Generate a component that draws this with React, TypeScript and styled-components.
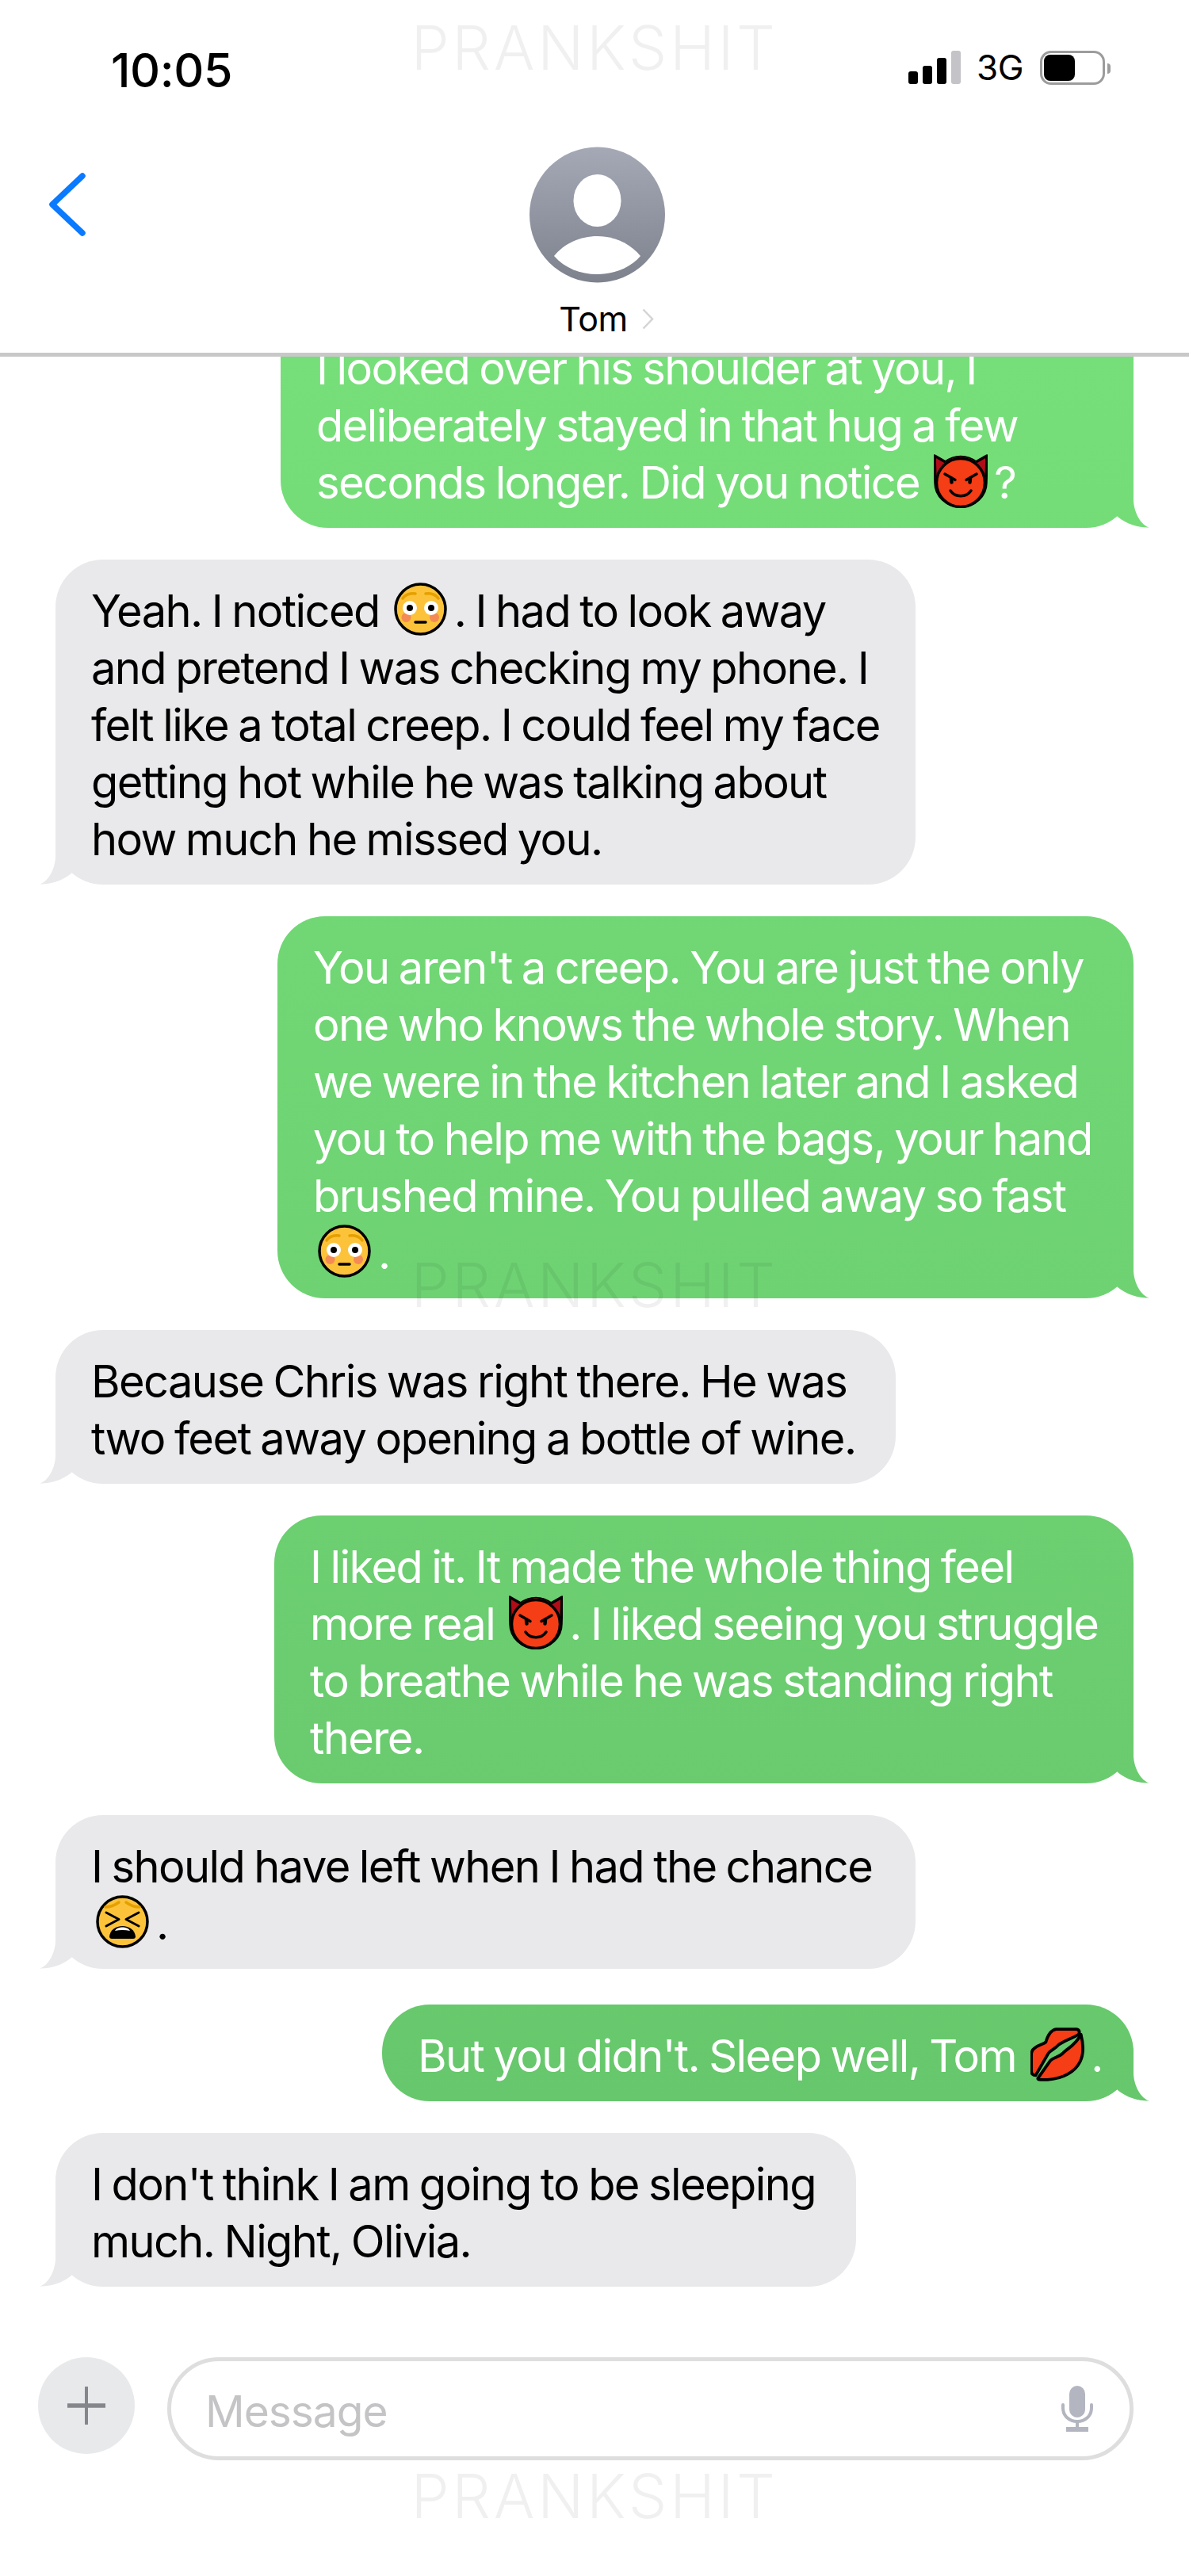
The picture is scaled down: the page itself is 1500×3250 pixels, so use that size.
import React from "react";
import styled, { createGlobalStyle, css } from "styled-components";

const GlobalStyle = createGlobalStyle`
  html, body { margin: 0; padding: 0; background: #fff; }
  body { font-family: Inter, "Liberation Sans", sans-serif; }
`;

const Screen = styled.div`
  position: relative;
  width: 1500px;
  height: 3250px;
  display: flex;
  flex-direction: column;
  overflow: hidden;
  background: #fff;
`;

const Watermark = styled.div<{ $top: number }>`
  position: absolute;
  left: 0;
  right: 0;
  top: ${(p) => p.$top}px;
  text-align: center;
  font-size: 77px;
  line-height: 70px;
  font-weight: 300;
  letter-spacing: 3.5px;
  color: rgba(0, 0, 0, 0.06);
  pointer-events: none;
`;

const Header = styled.header`
  flex: none;
  height: 450px;
  box-sizing: border-box;
  border-bottom: 5px solid #c8c8c8;
`;

const StatusBar = styled.div`
  height: 176px;
  display: flex;
  align-items: center;
  justify-content: space-between;
  padding: 0 106px 0 140px;
`;

const Time = styled.div`
  font-size: 59px;
  font-weight: 500;
  letter-spacing: -0.4px;
  color: #000;
`;

const StatusIcons = styled.div`
  display: flex;
  align-items: center;
  margin-top: -6px;
`;

const SignalBars = styled.div`
  display: flex;
  align-items: flex-end;
  gap: 6px;
  height: 42px;
  margin-right: 20px;
`;

const Bar = styled.span<{ $height: number; $off?: boolean }>`
  width: 12px;
  height: ${(p) => p.$height}px;
  border-radius: 3px;
  background: ${(p) => (p.$off ? "#c3c3c8" : "#000")};
`;

const Network = styled.span`
  font-size: 44px;
  font-weight: 400;
  letter-spacing: -0.5px;
  color: #000;
  margin-right: 21px;
`;

const Battery = styled.div`
  position: relative;
  width: 82px;
  height: 43px;
  box-sizing: border-box;
  border: 3px solid #9c9c9c;
  border-radius: 14px;
  padding: 2px;
  &::after {
    content: "";
    position: absolute;
    right: -10px;
    top: 13px;
    width: 4px;
    height: 13px;
    border-radius: 0 4px 4px 0;
    background: #9c9c9c;
  }
`;

const BatteryFill = styled.div`
  width: 39px;
  height: 100%;
  border-radius: 8px;
  background: #000;
`;

const Nav = styled.nav`
  display: grid;
  grid-template-columns: 1fr auto 1fr;
  padding: 9px 0 0 6px;
`;

const BackIcon = styled.svg`
  width: 46px;
  height: 80px;
  margin: 33px 0 0 56px;
`;

const Contact = styled.div`
  display: flex;
  flex-direction: column;
  align-items: center;
`;

const NameRow = styled.div`
  display: flex;
  align-items: center;
  gap: 18px;
  margin-top: 19px;
  padding-left: 24px;
  font-size: 43px;
  line-height: 52px;
  letter-spacing: -0.5px;
  color: #000;
`;

const Thread = styled.main`
  flex: 1;
  min-height: 0;
  display: flex;
  flex-direction: column;
  justify-content: flex-end;
  gap: 40px;
  padding: 0 70px;
  overflow: hidden;
`;

const tail = css`
  content: "";
  position: absolute;
  bottom: 0;
  width: 50px;
  height: 67px;
  background: inherit;
`;

const Bubble = styled.div<{ $sent?: boolean; $width: number; $cut?: boolean; $spaced?: boolean }>`
  position: relative;
  flex: none;
  box-sizing: border-box;
  width: ${(p) => p.$width}px;
  padding: 29px 0 21px 45px;
  margin-bottom: ${(p) => (p.$spaced ? 5 : 0)}px;
  border-radius: 60px;
  font-size: 56px;
  line-height: 72px;
  letter-spacing: -1.6px;
  word-spacing: -2px;
  white-space: nowrap;
  ${(p) =>
    p.$sent
      ? css`
          align-self: flex-end;
          color: #fff;
          background: linear-gradient(180deg, #76df79 450px, #67c76c 2650px) fixed;
          &::after {
            ${tail}
            right: -20px;
            clip-path: path("M30 0L30 33C31 49 40 64 50 66.5C38 67 22 63 10 53L0 40Z");
          }
        `
      : css`
          align-self: flex-start;
          color: #000;
          background: #e9e9eb;
          &::after {
            ${tail}
            left: -20px;
            clip-path: path("M20 0L20 33C19 49 10 64 0 66.5C12 67 28 63 40 53L50 40Z");
          }
        `}
  ${(p) =>
    p.$cut &&
    css`
      border-top-left-radius: 0;
      border-top-right-radius: 0;
    `}
`;

const EmojiSvg = styled.svg`
  display: inline-block;
  width: 68px;
  height: 68px;
  margin: -12px 8px -12px 6px;
  vertical-align: baseline;
`;

const Devil = () => (
  <EmojiSvg viewBox="0 0 68 68">
    <path d="M1 2L15 10A31 31 0 0 1 53 10L67 2L66 36A32 30 0 0 1 2 36Z" fill="#b10d19" stroke="#000" strokeWidth="3.5" strokeLinejoin="round" />
    <path d="M15 10A31 31 0 0 1 53 10L64 25A30 30 0 0 1 66 36A32 30 0 0 1 2 36A30 30 0 0 1 4 25Z" fill="#f53d16" />
    <circle cx="34" cy="36" r="30.5" fill="none" stroke="#000" strokeWidth="3.5" />
    <path d="M14 25L27 32.500M54 25L41 32.500" stroke="#000" strokeWidth="3.5" strokeLinecap="round" />
    <path d="M22 30.500L22.500 35.500M46 30.500L45.500 35.500" stroke="#000" strokeWidth="4.500" strokeLinecap="round" />
    <path d="M21 46C27 55 41 55 47 46" fill="none" stroke="#000" strokeWidth="3.5" strokeLinecap="round" />
  </EmojiSvg>
);

const Flushed = () => (
  <EmojiSvg viewBox="0 0 68 68">
    <circle cx="33.500" cy="33.500" r="31.500" fill="#fcc33a" stroke="#000" strokeWidth="3.5" />
    <path d="M11 20C14 15 21 13 27 14M56 20C53 15 46 13 40 14" fill="none" stroke="#e5a000" strokeWidth="3.5" strokeLinecap="round" />
    <circle cx="15.500" cy="44" r="6" fill="#f48b55" />
    <circle cx="51" cy="44" r="6" fill="#f48b55" />
    <circle cx="20" cy="32" r="9" fill="#fff" />
    <circle cx="47" cy="32" r="9" fill="#fff" />
    <circle cx="20" cy="32" r="4" fill="#000" />
    <circle cx="47" cy="32" r="4" fill="#000" />
    <path d="M27 50H40" stroke="#000" strokeWidth="3.5" strokeLinecap="round" />
  </EmojiSvg>
);

const Tired = () => (
  <EmojiSvg viewBox="0 0 68 68">
    <circle cx="33.500" cy="33.500" r="31.500" fill="#fcc33a" stroke="#000" strokeWidth="3.5" />
    <path d="M12 15C19 15 25 12 29 9M55 15C48 15 42 12 38 9" fill="none" stroke="#e5a000" strokeWidth="3.5" strokeLinecap="round" />
    <path d="M13 22L29 30.500L13 39M54 22L38 30.500L54 39" fill="none" stroke="#000" strokeWidth="3" strokeLinecap="round" strokeLinejoin="round" />
    <path d="M17 52C18 44 25 39 33.500 39C42 39 49 44 50 52C50 54 49 55 47 55H20C18 55 17 54 17 52Z" fill="#000" />
    <path d="M24 45C26 41.500 30 40.500 33.500 40.500C37 40.500 41 41.500 43 45C37 43.500 30 43.500 24 45Z" fill="#fff" />
  </EmojiSvg>
);

const Lips = () => (
  <EmojiSvg viewBox="0 0 63 63">
    <path d="M9 60L59 8L61 22L56 42L38 58L18 62Z" fill="#000" />
    <path d="M5 24C9 20 15 20 18 17C20 10 23 3 30 2L54 2C58 3 58 7 55 9C48 13 42 14 33 20C29 25 24 26 21 30L6 56C3 56 1 54 1 51L1 32C1 28 2 26 5 24Z" fill="#f53d16" stroke="#000" strokeWidth="3.5" strokeLinejoin="round" />
    <path d="M9 59L23 39C26 35 33 35 38 30C43 24 52 22 59 8C62 20 62 32 58 40C52 52 38 60 20 61L12 61C9 61 8 60 9 59Z" fill="#f53d16" stroke="#000" strokeWidth="3.5" strokeLinejoin="round" />
  </EmojiSvg>
);

const Composer = styled.footer`
  flex: none;
  height: 365px;
  box-sizing: border-box;
  display: flex;
  align-items: flex-start;
  gap: 41px;
  padding: 89px 70px 0 48px;
`;

const PlusButton = styled.div`
  flex: none;
  width: 122px;
  height: 122px;
  border-radius: 50%;
  background: #e8e9eb;
  display: flex;
  align-items: center;
  justify-content: center;
`;

const Field = styled.div`
  flex: 1;
  height: 130px;
  box-sizing: border-box;
  border: 5px solid #dedede;
  border-radius: 65px;
  display: flex;
  align-items: center;
  justify-content: space-between;
  padding: 0 46px 0 43px;
`;

const Placeholder = styled.span`
  font-size: 55px;
  letter-spacing: -1px;
  color: #c4c4c6;
  margin-top: 6px;
`;

export default function App() {
  return (
    <Screen>
      <GlobalStyle />
      <Header>
        <StatusBar>
          <Time>10:05</Time>
          <StatusIcons>
            <SignalBars>
              <Bar $height={16} />
              <Bar $height={23} />
              <Bar $height={33} />
              <Bar $height={42} $off />
            </SignalBars>
            <Network>3G</Network>
            <Battery>
              <BatteryFill />
            </Battery>
          </StatusIcons>
        </StatusBar>
        <Nav>
          <BackIcon viewBox="0 0 46 80">
            <path d="M42 4L4 40L42 76" fill="none" stroke="#0a7aff" strokeWidth="7.5" strokeLinecap="round" strokeLinejoin="round" />
          </BackIcon>
          <Contact>
            <svg width="171" height="172" viewBox="0 0 171 172">
              <defs>
                <linearGradient id="avatarShade" x1="0" y1="0" x2="0" y2="1">
                  <stop offset="0" stopColor="#a5a9b6" />
                  <stop offset="1" stopColor="#7e828d" />
                </linearGradient>
              </defs>
              <circle cx="85.500" cy="86" r="85.500" fill="url(#avatarShade)" />
              <ellipse cx="85.500" cy="68" rx="30" ry="33" fill="#fff" />
              <path d="M31 138C44 122 64 113 85.500 113C107 113 127 122 140 138C127 153 107 161 85.500 161C64 161 44 153 31 138Z" fill="#fff" />
            </svg>
            <NameRow>
              Tom
              <svg width="15" height="27" viewBox="0 0 15 27">
                <path d="M1.500 1.500L13 13.500L1.500 25.500" fill="none" stroke="#d4d4d4" strokeWidth="2.500" />
              </svg>
            </NameRow>
          </Contact>
        </Nav>
      </Header>

      <Thread>
        <Bubble $sent $width={1076} $cut>
          I looked over his shoulder at you, I<br />
          deliberately stayed in that hug a few<br />
          seconds longer. Did you notice <Devil />?
        </Bubble>
        <Bubble $width={1085}>
          Yeah. I noticed <Flushed />. I had to look away<br />
          and pretend I was checking my phone. I<br />
          felt like a total creep. I could feel my face<br />
          getting hot while he was talking about<br />
          how much he missed you.
        </Bubble>
        <Bubble $sent $width={1080}>
          You aren't a creep. You are just the only<br />
          one who knows the whole story. When<br />
          we were in the kitchen later and I asked<br />
          you to help me with the bags, your hand<br />
          brushed mine. You pulled away so fast<br />
          <Flushed />.
        </Bubble>
        <Bubble $width={1060}>
          Because Chris was right there. He was<br />
          two feet away opening a bottle of wine.
        </Bubble>
        <Bubble $sent $width={1084}>
          I liked it. It made the whole thing feel<br />
          more real <Devil />. I liked seeing you struggle<br />
          to breathe while he was standing right<br />
          there.
        </Bubble>
        <Bubble $width={1085} $spaced>
          I should have left when I had the chance<br />
          <Tired />.
        </Bubble>
        <Bubble $sent $width={948}>
          But you didn't. Sleep well, Tom <Lips />.
        </Bubble>
        <Bubble $width={1010}>
          I don't think I am going to be sleeping<br />
          much. Night, Olivia.
        </Bubble>
      </Thread>

      <Composer>
        <PlusButton>
          <svg width="48" height="48" viewBox="0 0 48 48">
            <path d="M24 1V47" stroke="#85868c" strokeWidth="4" strokeLinecap="round" />
            <path d="M1 24H47" stroke="#85868c" strokeWidth="5.500" strokeLinecap="round" />
          </svg>
        </PlusButton>
        <Field>
          <Placeholder>Message</Placeholder>
          <svg width="40" height="58" viewBox="0 0 40 58">
            <rect x="10" y="0" width="20" height="40" rx="10" fill="#b3b6c0" />
            <path d="M2 24V28C2 38 10 45 20 45C30 45 38 38 38 28V24" fill="none" stroke="#b3b6c0" strokeWidth="4" strokeLinecap="round" />
            <path d="M20 45V53" stroke="#b3b6c0" strokeWidth="4" />
            <rect x="6" y="52" width="28" height="6" fill="#b3b6c0" />
          </svg>
        </Field>
      </Composer>

      <Watermark $top={25}>PRANKSHIT</Watermark>
      <Watermark $top={1586}>PRANKSHIT</Watermark>
      <Watermark $top={3114}>PRANKSHIT</Watermark>
    </Screen>
  );
}
